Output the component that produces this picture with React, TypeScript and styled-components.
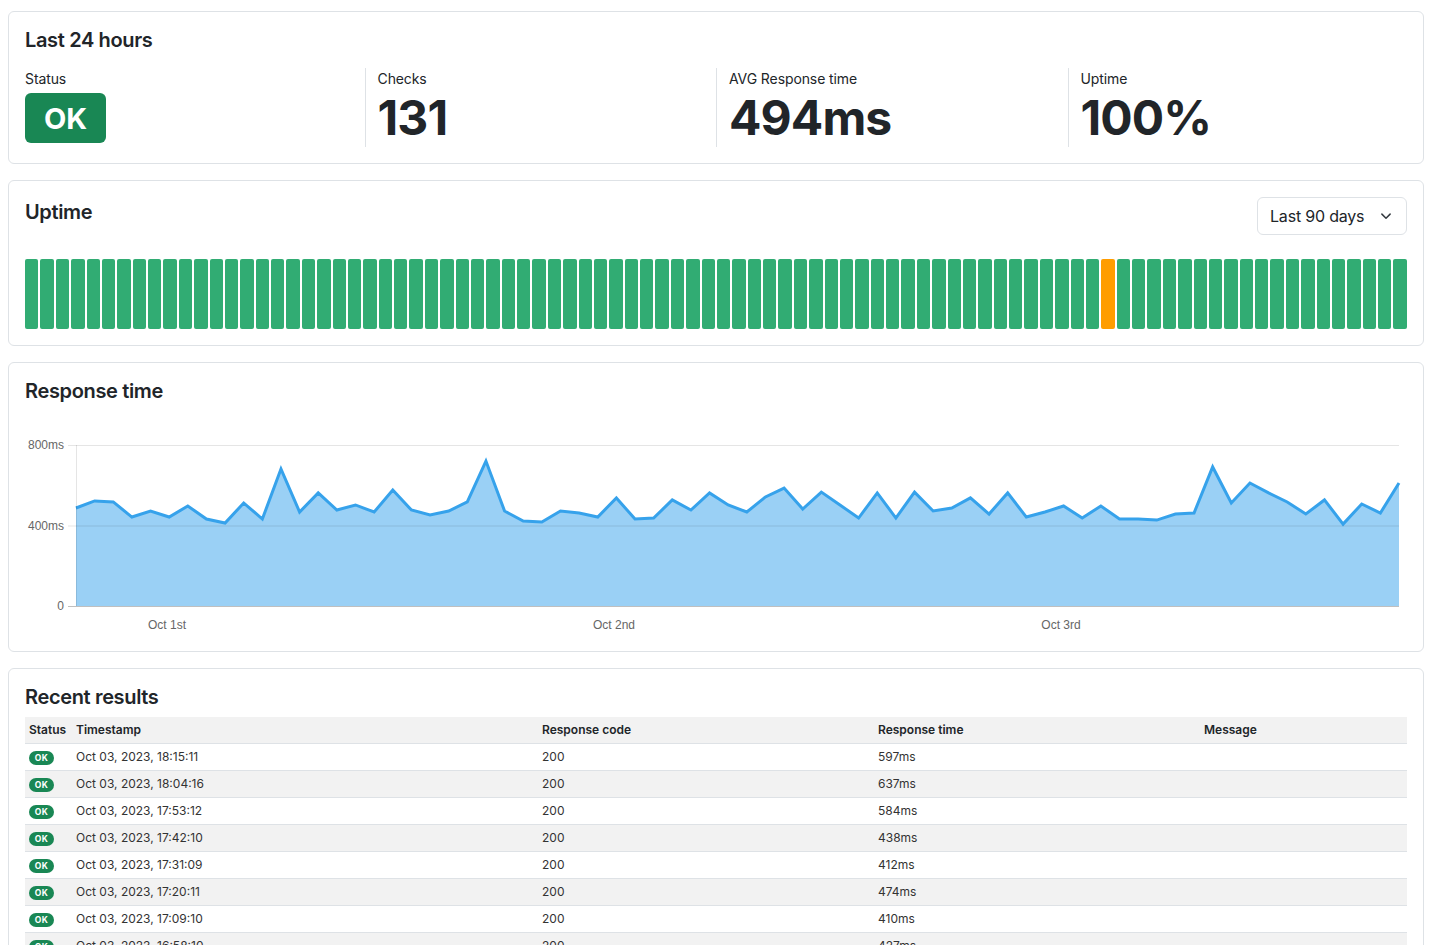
import React from "react";
import styled, { createGlobalStyle } from "styled-components";

const GlobalStyle = createGlobalStyle`
  html, body { margin: 0; padding: 0; background: #ffffff; }
  body {
    font-family: Inter, "Noto Sans", "Liberation Sans", sans-serif;
    color: #212529;
    -webkit-font-smoothing: antialiased;
  }
  * { box-sizing: border-box; }
`;

const Page = styled.main`
  display: flex;
  flex-direction: column;
  gap: 16px;
  padding: 11px 9px 0 8px;
`;

const Card = styled.section`
  background: #fff;
  border: 1px solid #dee2e6;
  border-radius: 6px;
  padding: 16px;
`;

const CardTitle = styled.h2<{ $offset?: number }>`
  margin: ${(p) => p.$offset ?? 0}px 0 0 0;
  font-size: 20px;
  line-height: 24px;
  font-weight: 600;
  color: #212529;
  letter-spacing: -0.35px;
`;

const StatsRow = styled.div`
  display: grid;
  grid-template-columns: repeat(4, 1fr);
  margin: 16px -12px 0;
`;

const StatCol = styled.div<{ $divider?: boolean }>`
  padding: 0 12px;
  border-left: ${(p) => (p.$divider ? "1px solid #dee2e6" : "none")};
  display: flex;
  flex-direction: column;
  align-items: flex-start;
`;

const StatLabel = styled.div`
  font-size: 14px;
  line-height: 21px;
  color: #212529;
  letter-spacing: -0.1px;
`;

const StatValue = styled.div`
  font-size: 48px;
  line-height: 58px;
  font-weight: 700;
  color: #212529;
  letter-spacing: -0.9px;
`;

const BigBadge = styled.div`
  margin: 4px 0;
  height: 50px;
  padding: 0 19px;
  display: flex;
  align-items: center;
  background: #198754;
  color: #fff;
  border-radius: 6px;
  font-size: 29px;
  font-weight: 700;
`;

const HeaderRow = styled.div`
  display: flex;
  justify-content: space-between;
  align-items: flex-start;
`;

const Select = styled.div`
  width: 150px;
  height: 38px;
  border: 1px solid #dee2e6;
  border-radius: 6px;
  display: flex;
  align-items: center;
  justify-content: space-between;
  padding: 0 14px 0 12px;
  font-size: 16px;
  letter-spacing: -0.2px;
  color: #212529;
`;

const Bars = styled.div`
  display: flex;
  gap: 2px;
  margin-top: 24px;
  height: 70px;
`;

const Bar = styled.div<{ $state: "up" | "degraded" }>`
  flex: 1;
  border-radius: 2px;
  background: ${(p) => (p.$state === "up" ? "#31ac73" : "#ff9d00")};
`;

const ChartWrap = styled.div`
  margin-top: 16px;
  height: 216px;
`;

const ChartSvg = styled.svg`
  display: block;
  width: 100%;
  height: 216px;
  font-family: "Liberation Sans", Arial, sans-serif;
`;

const Table = styled.table`
  margin-top: 8px;
  width: 100%;
  border-collapse: collapse;
  table-layout: fixed;
  font-size: 12px;
`;

const Th = styled.th<{ $w?: number }>`
  width: ${(p) => (p.$w ? `${p.$w}px` : "auto")};
  text-align: left;
  font-weight: 600;
  background: #f2f2f2;
  height: 26px;
  padding: 0 4px;
  border-bottom: 1px solid #dee2e6;
  color: #212529;
`;

const Tr = styled.tr<{ $striped: boolean }>`
  background: ${(p) => (p.$striped ? "#f2f2f2" : "#fff")};
`;

const Td = styled.td`
  height: 27px;
  padding: 0 4px;
  border-bottom: 1px solid #dee2e6;
  color: #333;
  vertical-align: middle;
`;

const SmallBadge = styled.span`
  display: inline-flex;
  align-items: center;
  justify-content: center;
  width: 25px;
  height: 14px;
  border-radius: 7px;
  background: #198754;
  color: #fff;
  font-size: 8.5px;
  font-weight: 700;
  letter-spacing: 0.3px;
`;

const ms = [
  487, 522, 517, 442, 472, 442, 497, 432, 412, 512, 432, 681, 467, 562, 477, 502, 467, 576,
  477, 452, 472, 517, 720, 472, 422, 417, 472, 462, 442, 537, 432, 437, 527, 477, 562, 502,
  467, 542, 586, 482, 566, 502, 437, 562, 437, 566, 472, 487, 537, 457, 562, 442, 467, 497,
  437, 497, 432, 432, 427, 457, 462, 691, 512, 611, 562, 517, 457, 527, 407, 507, 462, 611,
];

const rows = [
  ["Oct 03, 2023, 18:15:11", "200", "597ms"],
  ["Oct 03, 2023, 18:04:16", "200", "637ms"],
  ["Oct 03, 2023, 17:53:12", "200", "584ms"],
  ["Oct 03, 2023, 17:42:10", "200", "438ms"],
  ["Oct 03, 2023, 17:31:09", "200", "412ms"],
  ["Oct 03, 2023, 17:20:11", "200", "474ms"],
  ["Oct 03, 2023, 17:09:10", "200", "410ms"],
  ["Oct 03, 2023, 16:58:10", "200", "427ms"],
  ["Oct 03, 2023, 16:47:12", "200", "455ms"],
  ["Oct 03, 2023, 16:36:09", "200", "431ms"],
];

function Chevron() {
  return (
    <svg width="12" height="12" viewBox="0 0 16 16" fill="none">
      <path d="M2.5 5.5 8 11l5.5-5.5" stroke="#343a40" strokeWidth="2" strokeLinecap="round" strokeLinejoin="round" />
    </svg>
  );
}

function ResponseChart() {
  const left = 51;
  const right = 1374;
  const top = 26;
  const bottom = 187;
  const step = (right - left) / (ms.length - 1);
  const y = (v: number) => bottom - (v / 800) * (bottom - top);
  const pts = ms.map((v, i) => `${(left + i * step).toFixed(2)},${y(v).toFixed(2)}`);
  const line = `M${pts.join(" L")}`;
  const area = `${line} L${right},${bottom} L${left},${bottom} Z`;
  const grid = [
    { v: 800, label: "800ms" },
    { v: 400, label: "400ms" },
    { v: 0, label: "0" },
  ];
  return (
    <ChartSvg viewBox="0 0 1382 216" preserveAspectRatio="none">
      <path d={area} fill="rgba(54,162,235,0.5)" />
      <path d={line} fill="none" stroke="#36a2eb" strokeWidth="3" strokeLinejoin="miter" />
      {grid.map((g) => (
        <g key={g.label}>
          <line x1={43} x2={right} y1={y(g.v) + 0.5} y2={y(g.v) + 0.5} stroke={g.v === 0 ? "rgba(0,0,0,0.25)" : "rgba(0,0,0,0.1)"} />
          <text x={39} y={y(g.v) + 4} textAnchor="end" fontSize="12" fill="#666">
            {g.label}
          </text>
        </g>
      ))}
      <line x1={left + 0.5} x2={left + 0.5} y1={top} y2={bottom} stroke="rgba(0,0,0,0.1)" />
      {[
        { x: 142, t: "Oct 1st" },
        { x: 589, t: "Oct 2nd" },
        { x: 1036, t: "Oct 3rd" },
      ].map((l) => (
        <text key={l.t} x={l.x} y={210} textAnchor="middle" fontSize="12" fill="#666">
          {l.t}
        </text>
      ))}
    </ChartSvg>
  );
}

export default function App() {
  const bars = Array.from({ length: 90 }, (_, i) => (i === 70 ? "degraded" : "up") as "up" | "degraded");
  return (
    <>
      <GlobalStyle />
      <Page>
        <Card>
          <CardTitle>Last 24 hours</CardTitle>
          <StatsRow>
            <StatCol>
              <StatLabel>Status</StatLabel>
              <BigBadge>OK</BigBadge>
            </StatCol>
            <StatCol $divider>
              <StatLabel>Checks</StatLabel>
              <StatValue>131</StatValue>
            </StatCol>
            <StatCol $divider>
              <StatLabel>AVG Response time</StatLabel>
              <StatValue>494ms</StatValue>
            </StatCol>
            <StatCol $divider>
              <StatLabel>Uptime</StatLabel>
              <StatValue>100%</StatValue>
            </StatCol>
          </StatsRow>
        </Card>

        <Card>
          <HeaderRow>
            <CardTitle $offset={3}>Uptime</CardTitle>
            <Select>
              <span>Last 90 days</span>
              <Chevron />
            </Select>
          </HeaderRow>
          <Bars>
            {bars.map((s, i) => (
              <Bar key={i} $state={s} />
            ))}
          </Bars>
        </Card>

        <Card>
          <CardTitle>Response time</CardTitle>
          <ChartWrap>
            <ResponseChart />
          </ChartWrap>
        </Card>

        <Card>
          <CardTitle>Recent results</CardTitle>
          <Table>
            <thead>
              <tr>
                <Th $w={47}>Status</Th>
                <Th $w={466}>Timestamp</Th>
                <Th $w={336}>Response code</Th>
                <Th $w={326}>Response time</Th>
                <Th>Message</Th>
              </tr>
            </thead>
            <tbody>
              {rows.map((r, i) => (
                <Tr key={r[0]} $striped={i % 2 === 1}>
                  <Td>
                    <SmallBadge>OK</SmallBadge>
                  </Td>
                  <Td>{r[0]}</Td>
                  <Td>{r[1]}</Td>
                  <Td>{r[2]}</Td>
                  <Td />
                </Tr>
              ))}
            </tbody>
          </Table>
        </Card>
      </Page>
    </>
  );
}
